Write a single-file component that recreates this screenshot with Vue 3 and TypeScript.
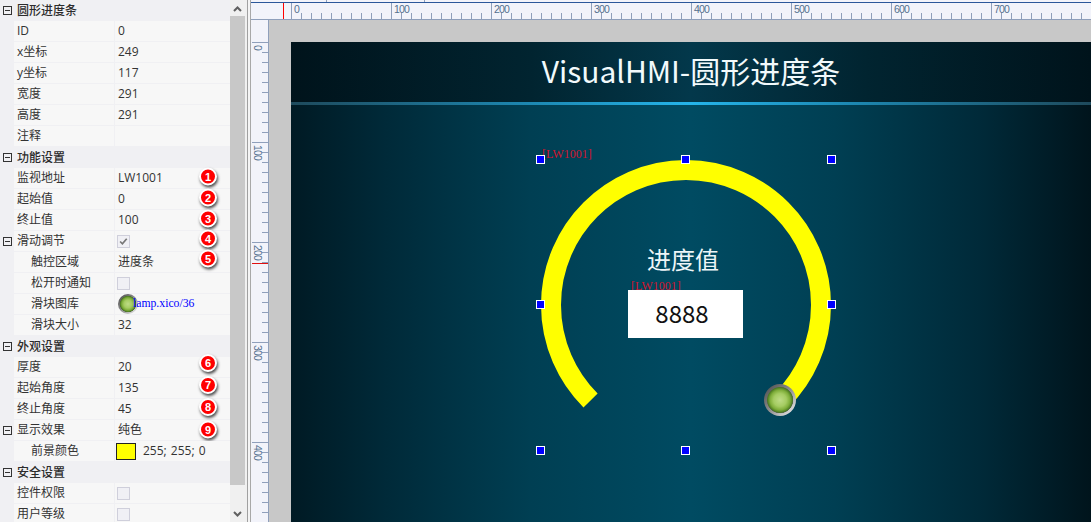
<script setup lang="ts">
interface Row {
  label: string
  kind: 'section' | 'text' | 'check' | 'link' | 'color'
  value?: string
  indent?: boolean
  expander?: boolean
  checked?: boolean
  badge?: number
  dy?: number
}

const rows: Row[] = [
  { label: '圆形进度条', kind: 'section' },
  { label: 'ID', kind: 'text', value: '0' },
  { label: 'x坐标', kind: 'text', value: '249' },
  { label: 'y坐标', kind: 'text', value: '117' },
  { label: '宽度', kind: 'text', value: '291' },
  { label: '高度', kind: 'text', value: '291' },
  { label: '注释', kind: 'text', value: '' },
  { label: '功能设置', kind: 'section' },
  { label: '监视地址', kind: 'text', value: 'LW1001', badge: 1, dy: -1.5 },
  { label: '起始值', kind: 'text', value: '0', badge: 2, dy: -1.5 },
  { label: '终止值', kind: 'text', value: '100', badge: 3, dy: -1.5 },
  { label: '滑动调节', kind: 'check', checked: true, expander: true, badge: 4, dy: -2.5 },
  { label: '触控区域', kind: 'text', value: '进度条', indent: true, badge: 5, dy: -3.5 },
  { label: '松开时通知', kind: 'check', indent: true },
  { label: '滑块图库', kind: 'link', value: 'lamp.xico/36', indent: true },
  { label: '滑块大小', kind: 'text', value: '32', indent: true },
  { label: '外观设置', kind: 'section' },
  { label: '厚度', kind: 'text', value: '20', badge: 6, dy: -4 },
  { label: '起始角度', kind: 'text', value: '135', badge: 7, dy: -3 },
  { label: '终止角度', kind: 'text', value: '45', badge: 8, dy: -2 },
  { label: '显示效果', kind: 'text', value: '纯色', expander: true, badge: 9, dy: -0.5 },
  { label: '前景颜色', kind: 'color', value: '255; 255; 0', indent: true },
  { label: '安全设置', kind: 'section' },
  { label: '控件权限', kind: 'check' },
  { label: '用户等级', kind: 'check' },
]

const hLabels = [0, 100, 200, 300, 400, 500, 600, 700]
const vLabels = [0, 100, 200, 300, 400]

const handleOffsets = [-4, 141, 287]
const handles = handleOffsets
  .flatMap((y) => handleOffsets.map((x) => ({ x, y })))
  .filter((h) => !(h.x === 141 && h.y === 141))
</script>

<template>
  <div class="app">
    <aside class="panel">
      <div class="props">
        <div
          v-for="row in rows"
          :key="row.label + row.kind"
          class="row"
          :class="{ section: row.kind === 'section' }"
        >
          <span v-if="row.kind === 'section' || row.expander" class="expander"></span>
          <template v-if="row.kind === 'section'">
            <span class="section-title">{{ row.label }}</span>
          </template>
          <template v-else>
            <div class="name" :class="{ indent: row.indent }">{{ row.label }}</div>
            <div class="value">
              <span v-if="row.kind === 'text'" class="value-text">{{ row.value }}</span>
              <span v-else-if="row.kind === 'check'" class="check">
                <svg v-if="row.checked" viewBox="0 0 13 13" width="11" height="11">
                  <path d="M2.5 6.5 L5.2 9.2 L10.3 3.2" fill="none" stroke="#777" stroke-width="2" />
                </svg>
              </span>
              <template v-else-if="row.kind === 'link'">
                <span class="knob knob-small"></span>
                <span class="link">{{ row.value }}</span>
              </template>
              <template v-else>
                <span class="swatch"></span>
                <span class="swatch-text value-text">{{ row.value }}</span>
              </template>
            </div>
          </template>
          <span
            v-if="row.badge"
            class="badge"
            :style="{ transform: `translateY(${row.dy}px)` }"
          >{{ row.badge }}</span>
        </div>
      </div>
      <div class="scrollbar">
        <svg class="arrow" viewBox="0 0 15 16" width="15" height="16">
          <path d="M4 11 L7.5 7.5 L11 11" fill="none" stroke="#606060" stroke-width="2" />
        </svg>
        <div class="thumb"></div>
        <div class="track"></div>
        <svg class="arrow" viewBox="0 0 15 16" width="15" height="16">
          <path d="M4 6 L7.5 9.5 L11 6" fill="none" stroke="#606060" stroke-width="2" />
        </svg>
      </div>
    </aside>

    <div class="splitter"></div>

    <main class="designer">
      <div class="tabstrip">
        <span class="tab tab-a"></span>
        <span class="tab tab-b"></span>
      </div>
      <div class="hruler">
        <div class="hscale">
          <div v-for="n in hLabels" :key="n" class="hmark">{{ n }}</div>
        </div>
        <span class="hcursor"></span>
      </div>
      <div class="work">
        <div class="vruler">
          <div class="vscale">
            <div v-for="n in vLabels" :key="n" class="vmark">
              <span class="vtext">{{ n }}</span>
            </div>
          </div>
          <span class="vcursor"></span>
        </div>
        <div class="stage">
          <div class="screen">
            <header class="screen-head">VisualHMI-圆形进度条</header>
            <div class="screen-line"></div>
            <div class="screen-body"></div>

            <div class="gauge">
              <svg class="arc" viewBox="0 0 292 292" width="292" height="292">
                <path
                  d="M50.54 241.46 A135 135 0 1 1 241.46 241.46"
                  fill="none"
                  stroke="#ffff00"
                  stroke-width="20"
                />
              </svg>
              <span class="tag gauge-tag">[LW1001]</span>
              <span
                v-for="h in handles"
                :key="`${h.x}-${h.y}`"
                class="handle"
                :style="{ left: `${h.x}px`, top: `${h.y}px` }"
              ></span>
            </div>
            <div class="caption">进度值</div>
            <span class="tag box-tag">[LW1001]</span>
            <div class="number">8888</div>
            <span class="knob knob-large"></span>
          </div>
        </div>
      </div>
    </main>
  </div>
</template>

<style>
html,
body {
  margin: 0;
  overflow: hidden;
  background: #f0f0f0;
}
</style>

<style scoped>
.app {
  display: flex;
  width: 1091px;
  height: 522px;
  overflow: hidden;
  font-family: "Noto Sans CJK SC", "Liberation Sans", sans-serif;
  font-size: 12px;
  color: #333;
}

.panel {
  display: flex;
  flex: none;
  width: 245px;
  height: 522px;
  overflow: hidden;
  background: #f0f0f3;
}

.props {
  flex: none;
  width: 230px;
}

.row {
  position: relative;
  display: flex;
  height: 21px;
  padding-left: 14px;
  box-sizing: border-box;
  line-height: 20px;
}

.section-title {
  padding-left: 3px;
  font-weight: 500;
  color: #2c2c2c;
}

.name,
.value {
  height: 20px;
  background: #f7f7f7;
  white-space: nowrap;
}

.name {
  flex: none;
  box-sizing: border-box;
  width: 100px;
  padding-left: 3px;
  font-family: "Open Sans", "Noto Sans CJK SC", sans-serif;
  line-height: 20px;
}

.name.indent {
  padding-left: 17px;
}

.value {
  position: relative;
  display: flex;
  align-items: center;
  flex: none;
  width: 115px;
  margin-left: 1px;
  box-sizing: border-box;
  padding-left: 3px;
}

.value-text {
  font-family: "Open Sans", "Noto Sans CJK SC", sans-serif;
}

.expander {
  position: absolute;
  left: 3px;
  top: 6px;
  box-sizing: border-box;
  width: 9px;
  height: 9px;
  border: 1px solid #333;
  background: linear-gradient(#333, #333) center / 5px 1px no-repeat;
}

.check {
  display: flex;
  align-items: center;
  justify-content: center;
  box-sizing: border-box;
  width: 13px;
  height: 13px;
  margin-left: -1px;
  border: 1px solid #cfcfdb;
  background: #f0f0f5;
}

.link {
  position: relative;
  padding-left: 15px;
  font-family: "Liberation Serif", serif;
  font-size: 11.7px;
  color: #0000ff;
}

.knob {
  position: absolute;
  border-radius: 50%;
  background:
    radial-gradient(circle closest-side at 50% 50%, #bedb86 0, #a5cc62 40%, #7fae3a 62%, #4c7a22 78%, #5a6a50 81%, rgba(90, 106, 80, 0) 84%),
    linear-gradient(135deg, #555 10%, #8f8f8f 50%, #e2e2e2 90%);
}

.knob-small {
  left: 3px;
  top: 0;
  width: 20px;
  height: 20px;
}

.knob-large {
  left: 473px;
  top: 342px;
  width: 32px;
  height: 32px;
}

.swatch {
  box-sizing: border-box;
  width: 20px;
  height: 17px;
  margin-left: -2px;
  border: 1px solid #222;
  background: #ffff00;
}

.swatch-text {
  margin-left: 7px;
  word-spacing: 1px;
}

.badge {
  position: absolute;
  left: 199px;
  top: 1px;
  display: flex;
  align-items: center;
  justify-content: center;
  box-sizing: border-box;
  width: 18px;
  height: 18px;
  border: 2px solid #fff;
  border-radius: 50%;
  background: #ff0000;
  box-shadow: 1px 2px 3px rgba(0, 0, 0, 0.7);
  font-family: "Liberation Sans", sans-serif;
  font-size: 11px;
  font-weight: 700;
  line-height: 1;
  color: #fff;
}

.scrollbar {
  display: flex;
  flex-direction: column;
  flex: none;
  width: 15px;
  background: #f0f0f0;
}

.arrow {
  flex: none;
  display: block;
}

.thumb {
  flex: none;
  height: 469px;
  background: #c8c8c8;
}

.track {
  flex: 1;
}

.splitter {
  flex: none;
  box-sizing: border-box;
  width: 4px;
  margin-left: 2px;
  border-left: 1px solid #a0a0a0;
  border-right: 1px solid #a8a8a8;
  background: #f4f4f4;
}

.designer {
  display: flex;
  flex-direction: column;
  flex: 1;
  min-width: 0;
  background: #f2f3fa;
}

.tabstrip {
  display: flex;
  flex: none;
  height: 3px;
  box-sizing: border-box;
  border-bottom: 1px solid #2b579a;
}

.tab {
  flex: none;
  box-sizing: border-box;
  border-right: 1px solid #8f9fbb;
}

.tab-a {
  width: 76px;
}

.tab-b {
  width: 98px;
}

.hruler {
  position: relative;
  flex: none;
  height: 17px;
  box-sizing: border-box;
  padding-left: 40px;
  border-bottom: 1px solid #8f9fbb;
  overflow: hidden;
}

.hscale {
  display: flex;
  height: 16px;
  background: repeating-linear-gradient(90deg, #8f9fbb 0 1px, transparent 1px 10px) 0 100% / 100% 6px no-repeat;
}

.hmark {
  flex: none;
  box-sizing: border-box;
  width: 100px;
  padding: 1px 0 0 2px;
  border-left: 1px solid #8f9fbb;
  font-family: "Liberation Sans", sans-serif;
  font-size: 10.5px;
  letter-spacing: -0.8px;
  line-height: 11px;
  color: #54708f;
}

.hcursor {
  position: absolute;
  left: 32px;
  top: 0;
  width: 1px;
  height: 16px;
  background: #ff0000;
}

.work {
  display: flex;
  flex: 1;
  min-height: 0;
}

.vruler {
  position: relative;
  flex: none;
  box-sizing: border-box;
  width: 18px;
  padding: 22px 0 0 1px;
  border-right: 1px solid #8f9fbb;
  overflow: hidden;
}

.vscale {
  height: 480px;
  background: repeating-linear-gradient(180deg, #8f9fbb 0 1px, transparent 1px 10px) 100% 0 / 6px 100% no-repeat;
}

.vmark {
  box-sizing: border-box;
  height: 100px;
  padding: 2px 0 0 0;
  border-top: 1px solid #8f9fbb;
}

.vtext {
  display: block;
  writing-mode: vertical-rl;
  font-family: "Liberation Sans", sans-serif;
  font-size: 10.5px;
  letter-spacing: -0.8px;
  line-height: 11px;
  color: #54708f;
}

.vcursor {
  position: absolute;
  left: 1px;
  top: 243px;
  width: 16px;
  height: 1px;
  background: #e01010;
}

.stage {
  flex: 1;
  min-width: 0;
  box-sizing: border-box;
  padding: 22px 0 0 22px;
  overflow: hidden;
  background: #c8c8c8;
}

.screen {
  position: relative;
  display: flex;
  flex-direction: column;
  width: 800px;
  height: 600px;
}

.screen-head {
  flex: none;
  height: 60px;
  background: linear-gradient(90deg, #00131b 0%, #012430 30%, #03384b 50%, #012430 72%, #00131b 100%);
  font-size: 30px;
  line-height: 56px;
  text-align: center;
  color: #f2fafc;
}

.screen-line {
  flex: none;
  height: 3px;
  background: linear-gradient(90deg, #1e4a5c 0%, #1d88b2 30%, #25b4ea 50%, #1d88b2 70%, #1e4a5c 100%);
}

.screen-body {
  flex: 1;
  background: linear-gradient(90deg, #001a24 0%, #002a39 12%, #003f53 30%, #004b62 50%, #003f53 68%, #002a39 86%, #00141c 100%);
}

.gauge {
  position: absolute;
  left: 249px;
  top: 117px;
  width: 291px;
  height: 291px;
}

.arc {
  display: block;
}

.handle {
  position: absolute;
  box-sizing: border-box;
  width: 9px;
  height: 9px;
  border: 1px solid #fff;
  background: #0000ff;
}

.tag {
  position: absolute;
  font-family: "Liberation Serif", serif;
  font-size: 12px;
  line-height: 12px;
  color: #d0142e;
  white-space: nowrap;
}

.gauge-tag {
  left: 2px;
  top: -11px;
}

.box-tag {
  left: 340px;
  top: 238px;
}

.caption {
  position: absolute;
  left: 356px;
  top: 200px;
  font-size: 24px;
  line-height: 34px;
  color: #eef6f8;
}

.number {
  position: absolute;
  left: 337px;
  top: 248px;
  box-sizing: border-box;
  width: 115px;
  height: 48px;
  padding-right: 7px;
  background: #fff;
  font-size: 24px;
  line-height: 46px;
  text-align: center;
  color: #111;
}
</style>
